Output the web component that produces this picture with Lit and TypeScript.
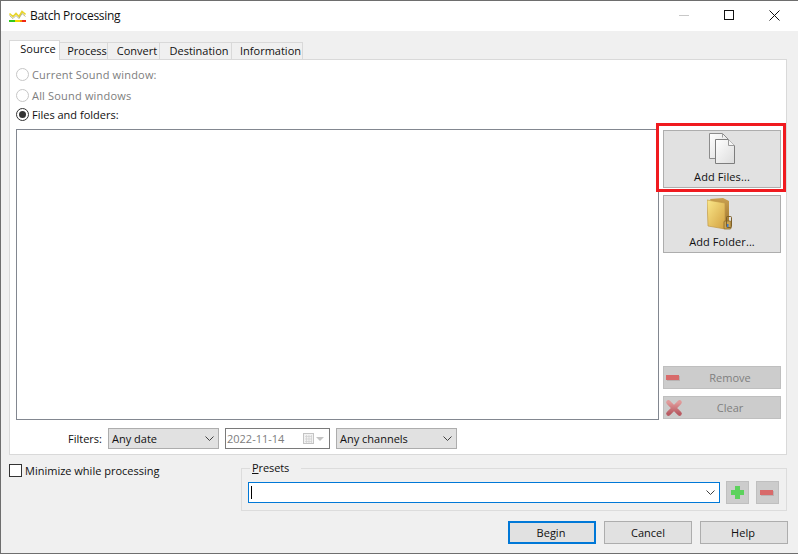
import { LitElement, html, css, svg } from "lit";
import { customElement } from "lit/decorators.js";

const chevron = svg`<svg class="chev" width="9" height="5" viewBox="0 0 9 5"><path d="M.5.5l4 4 4-4" fill="none" stroke="#404040" stroke-width="1"/></svg>`;

const minusIcon = svg`<svg width="15" height="7" viewBox="0 0 15 7"><rect x="1" y="2" width="13" height="5" fill="#b9b2b2"/><rect x="0" y="1" width="13" height="5" fill="#d86a6a"/></svg>`;

@customElement("app-root")
export class AppRoot extends LitElement {
  static styles = css`
    :host { display: block; width: 798px; height: 554px; font-family: "Open Sans", "Noto Sans", sans-serif; font-size: 11px; color: #101010; }
    * { box-sizing: border-box; }
    .window { width: 798px; height: 554px; background: #f0f0f0; border: 1px solid #6e6e6e; border-right: none; display: flex; flex-direction: column; }
    .titlebar { height: 30px; flex: none; background: #fff; display: flex; align-items: center; padding: 0 2px 2px 8px; gap: 4px; font-size: 12px; }
    .appicon { margin-top: 1px; }
    .title { flex: 1; color: #111; letter-spacing: -.3px; }
    .winbtns { display: flex; align-items: center; }
    .winbtn { width: 45px; height: 28px; display: flex; align-items: center; justify-content: center; }
    .winbtn.close svg { margin-left: 2px; }
    .body { flex: 1; padding: 9px 11px 9px 8px; display: flex; flex-direction: column; }
    .tabs { display: flex; height: 20px; align-items: flex-end; flex: none; position: relative; z-index: 1; margin-bottom: -1px; }
    .tab { height: 18px; background: #f0f0f0; border: 1px solid #d9d9d9; border-left: none; display: flex; align-items: center; justify-content: center; padding: 0 0 2px 7px; flex: none; }
    .tab.active { height: 20px; width: 51px; background: #fff; border: 1px solid #d9d9d9; border-bottom: none; padding: 0 0 4px 7px; }
    .t-process { width: 48px; } .t-convert { width: 52px; } .t-dest { width: 72px; } .t-info { width: 71px; }
    .panel { flex: none; height: 396px; width: 778px; background: #fff; border: 1px solid #d9d9d9; padding: 6px 5px 5px 6px; display: flex; flex-direction: column; }
    .radio { display: flex; align-items: center; gap: 3px; height: 16px; flex: none; }
    .r2 { margin-top: 5px; } .r3 { margin-top: 3px; }
    .radio.off { color: #7d7d7d; letter-spacing: .18px; }
    .dot { width: 13px; height: 13px; border-radius: 50%; border: 1px solid #c6c6c6; flex: none; display: flex; align-items: center; justify-content: center; background: #fff; }
    .radio.on .dot { border-color: #333; }
    .radio.on .dot::after { content: ""; width: 7px; height: 7px; background: #333; border-radius: 50%; }
    .main { display: flex; gap: 3px; margin-top: 7px; height: 291px; flex: none; }
    .list { width: 643px; border: 1px solid #828790; background: #fff; flex: none; }
    .side { width: 120px; display: flex; flex-direction: column; padding: 1px; flex: none; }
    .btn { background: #e1e1e1; border: 1px solid #adadad; display: flex; align-items: center; justify-content: center; font: inherit; color: inherit; padding: 0; }
    .big { width: 118px; height: 58px; flex-direction: column; flex: none; position: relative; padding-bottom: 2px; }
    .big svg { display: block; }
    .big span { line-height: 15px; margin-top: 4px; letter-spacing: .1px; }
    .big.files { padding-bottom: 1px; }
    .big.files span { margin-top: 5px; }
    .big + .big { margin-top: 7px; }
    .folder { margin-right: 5px; }
    .highlight { position: absolute; left: -8px; top: -8px; right: -6px; bottom: -5px; border: 3px solid #f01a1f; pointer-events: none; }
    .spacer { flex: 1; }
    .small { width: 118px; height: 23px; flex: none; background: #cccccc; border-color: #bfbfbf; color: #7f7f7f; position: relative; padding-left: 16px; }
    .small svg { position: absolute; left: 2px; }
    .small svg.x { left: 1px; }
    .small + .small { margin-top: 7px; }
    .filters { display: flex; align-items: center; height: 21px; margin-top: 8px; padding-left: 52px; gap: 6px; flex: none; }
    .select { height: 21px; background: #e1e1e1; border: 1px solid #adadad; display: flex; align-items: center; justify-content: space-between; padding: 0 4px 0 3px; flex: none; }
    .s-date { width: 111px; } .s-chan { width: 121px; }
    .date { width: 105px; height: 21px; background: #fff; border: 1px solid #7a7a7a; color: #7d7d7d; display: flex; align-items: center; padding: 0 4px 0 1px; justify-content: space-between; flex: none; }
    .lower { display: flex; margin-top: 9px; flex: none; }
    .check { display: flex; align-items: center; gap: 3px; height: 15px; width: 232px; flex: none; margin-top: -1px; }
    .box { width: 13px; height: 13px; background: #fff; border: 1px solid #333; }
    .presets { flex: none; width: 546px; height: 43px; border: 1px solid #dcdcdc; margin-top: 4px; padding: 13px 0 0 6px; display: flex; gap: 6px; position: relative; }
    .legend { position: absolute; left: 8px; top: -9px; background: #f0f0f0; padding: 0 12px 0 2px; line-height: 15px; letter-spacing: -.1px; }
    .combo { width: 472px; height: 21px; background: #fff; border: 1px solid #0078d7; display: flex; align-items: center; justify-content: space-between; padding: 0 4px 0 2px; flex: none; }
    .caret { width: 1px; height: 13px; background: #000; }
    .iconbtn { width: 23px; height: 23px; margin-top: -1px; background: #cccccc; border: 1px solid #bfbfbf; padding: 0; display: flex; align-items: center; justify-content: center; flex: none; }
    .iconbtn + .iconbtn { margin-left: 1px; }
    .footer { display: flex; justify-content: flex-end; gap: 8px; margin-top: 10px; margin-right: -1px; flex: none; }
    .fbtn { width: 88px; height: 23px; }
    .fbtn.nudge { padding-right: 2px; }
    .fbtn.default { border: 2px solid #0078d7; }
    u { text-decoration-thickness: 1px; }
  `;

  render() {
    return html`<div class="window">
      <div class="titlebar">
        <svg class="appicon" width="17" height="12" viewBox="0 0 17 12">
          <path d="M0.5 3.5l3.5 3 3-3 3 3 3-5 3.5 3" fill="none" stroke="#e8d52a" stroke-width="1.6"/>
          <path d="M0.5 5.5l3.5 3 3-3 3 3 3-5 3.5 3" fill="none" stroke="#8a8440" stroke-width=".6"/>
          <rect x="0" y="10" width="6" height="2" fill="#32c81e"/><rect x="6" y="10" width="5" height="2" fill="#f5d800"/><rect x="11" y="10" width="2" height="2" fill="#f59000"/><rect x="13" y="10" width="4" height="2" fill="#f02818"/>
        </svg>
        <span class="title">Batch Processing</span>
        <div class="winbtns">
          <div class="winbtn"><svg width="10" height="1"><rect width="10" height="1" fill="#c8c8c8"/></svg></div>
          <div class="winbtn"><svg width="10" height="10"><rect x=".5" y=".5" width="9" height="9" fill="none" stroke="#111"/></svg></div>
          <div class="winbtn close"><svg width="11" height="11"><path d="M.5.5l10 10M10.5.5l-10 10" stroke="#111" fill="none"/></svg></div>
        </div>
      </div>
      <div class="body">
        <div class="tabs">
          <div class="tab active">Source</div>
          <div class="tab t-process">Process</div>
          <div class="tab t-convert">Convert</div>
          <div class="tab t-dest">Destination</div>
          <div class="tab t-info">Information</div>
        </div>
        <div class="panel">
          <div class="radio off"><span class="dot"></span>Current Sound window:</div>
          <div class="radio off r2"><span class="dot"></span>All Sound windows</div>
          <div class="radio on r3"><span class="dot"></span>Files and folders:</div>
          <div class="main">
            <div class="list"></div>
            <div class="side">
              <button class="btn big files">
                <svg width="26" height="31" viewBox="0 0 26 31">
                  <defs><linearGradient id="pg" x1="0" y1="0" x2="1" y2="1"><stop offset="0" stop-color="#fff"/><stop offset="1" stop-color="#dcdcdc"/></linearGradient></defs>
                  <path d="M.5.5h13l6 6v19H.5z" fill="url(#pg)" stroke="#8c8c8c"/>
                  <path d="M6.5 6.5h13l6 6v18h-19z" fill="url(#pg)" stroke="#7d7d7d"/>
                  <path d="M19.5 6.5v6h6" fill="#f4f4f4" stroke="#9a9a9a"/>
                  <path d="M13.5.5v4" stroke="#a0a0a0"/>
                </svg>
                <span>Add Files...</span>
                <div class="highlight"></div>
              </button>
              <button class="btn big">
                <svg class="folder" width="25" height="33" viewBox="0 0 25 33">
                  <defs>
                    <linearGradient id="fg" x1="0" y1="0" x2="1" y2="1"><stop offset="0" stop-color="#fbe88a"/><stop offset="1" stop-color="#d2a040"/></linearGradient>
                    <linearGradient id="fb" x1="0" y1="0" x2="0" y2="1"><stop offset="0" stop-color="#c9a050"/><stop offset="1" stop-color="#9a7028"/></linearGradient>
                  </defs>
                  <path d="M3 2l13-1 6 3v24l-6 4z" fill="url(#fb)"/>
                  <path d="M0 3l18 3v26L1 29z" fill="url(#fg)" stroke="#c19a48" stroke-width=".7"/>
                  <rect x="17" y="24" width="7" height="8" rx="1" fill="#c9a456" stroke="#8a6a2a" stroke-width=".8"/>
                  <rect x="19.5" y="19.5" width="5" height="11" rx="1" fill="none" stroke="#7d5f28" stroke-width="1"/>
                  <rect x="20" y="27" width="1.5" height="3" fill="#3a7ad8"/>
                </svg>
                <span>Add Folder...</span>
              </button>
              <div class="spacer"></div>
              <button class="btn small">${minusIcon}<span>Remove</span></button>
              <button class="btn small">
                <svg class="x" width="18" height="18" viewBox="0 0 18 18">
                  <defs><linearGradient id="xg" x1="0" y1="0" x2="0" y2="1"><stop offset="0" stop-color="#e09a9a"/><stop offset="1" stop-color="#b85a62"/></linearGradient></defs>
                  <path d="M3.4 3.4l11.2 11.2M14.6 3.4L3.4 14.6" stroke="url(#xg)" stroke-width="4.4" stroke-linecap="round" fill="none"/>
                </svg>
                <span>Clear</span>
              </button>
            </div>
          </div>
          <div class="filters">
            <span>Filters:</span>
            <div class="select s-date"><span>Any date</span>${chevron}</div>
            <div class="date"><span>2022-11-14</span>
              <svg width="22" height="12" viewBox="0 0 22 12">
                <rect x=".5" y=".5" width="10" height="10" fill="#f2f2f2" stroke="#c4c4c4"/>
                <path d="M2 3.5h7M2 6h7M2 8.5h7M3.5 2v8M6 2v8M8.5 2v8" stroke="#d0d0d0" stroke-width=".7"/>
                <path d="M13 4h8l-4 4z" fill="#c4c4c4"/>
              </svg>
            </div>
            <div class="select s-chan"><span>Any channels</span>${chevron}</div>
          </div>
        </div>
        <div class="lower">
          <div class="check"><span class="box"></span>Minimize while processing</div>
          <div class="presets">
            <span class="legend"><u>P</u>resets</span>
            <div class="combo"><span class="caret"></span>${chevron}</div>
            <button class="iconbtn">
              <svg width="13" height="13" viewBox="0 0 13 13"><path d="M4 0h5v4h4v5H9v4H4V9H0V4h4z" fill="#5cd25c"/></svg>
            </button>
            <button class="iconbtn">${minusIcon}</button>
          </div>
        </div>
        <div class="footer">
          <button class="btn fbtn default nudge">Begin</button>
          <button class="btn fbtn">Cancel</button>
          <button class="btn fbtn nudge">Help</button>
        </div>
      </div>
    </div>`;
  }
}
